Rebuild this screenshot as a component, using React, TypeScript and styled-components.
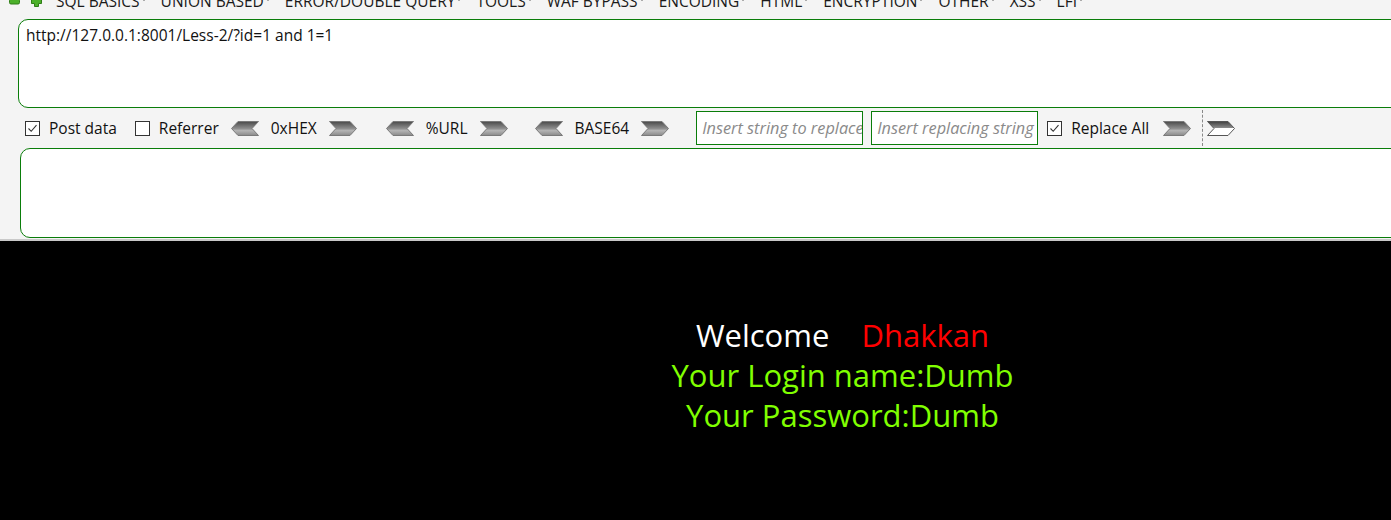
import React from "react";
import styled, { createGlobalStyle } from "styled-components";

const GlobalStyle = createGlobalStyle`
  html, body { margin: 0; padding: 0; background: #000; }
  body { font-family: "Open Sans", "Noto Sans", sans-serif; }
  #root { width: 1391px; height: 520px; overflow: hidden; }
`;

const UI_FONT = `"Open Sans", "Noto Sans", sans-serif`;
const GREEN = "#0a7d0a";

const Page = styled.div`
  display: flex;
  flex-direction: column;
  width: 100%;
  height: 520px;
  overflow: hidden;
  background: #000;
`;

const Panel = styled.div`
  background: #f4f4f4;
  display: flex;
  flex-direction: column;
  padding-bottom: 1px;
  border-bottom: 2px solid #c9c9c9;
`;

const MenuBar = styled.div`
  height: 10px;
  overflow: hidden;
`;

const MenuRow = styled.div`
  display: flex;
  align-items: center;
  height: 20px;
  margin-top: -9px;
  padding-left: 9px;
  font-family: ${UI_FONT};
  font-size: 15.5px;
  line-height: 20px;
  color: #1a1a1a;
  white-space: nowrap;
`;

const RoundIcon = styled.span<{ $gap: number }>`
  display: inline-flex;
  width: 11px;
  height: 11px;
  margin-right: ${(p) => p.$gap}px;
`;

const MenuItem = styled.span`
  display: inline-flex;
  align-items: center;
  margin-right: 15px;
`;

const Caret = styled.span`
  display: inline-block;
  width: 0;
  height: 0;
  margin-left: 2px;
  margin-top: -3px;
  border-left: 2.5px solid transparent;
  border-right: 2.5px solid transparent;
  border-top: 3px solid #222;
`;

const UrlBox = styled.div`
  margin-top: 9px;
  margin-left: 18px;
  width: 1420px;
  height: 77px;
  background: #fff;
  border: 1px solid ${GREEN};
  border-radius: 10px;
  padding: 5px 7px;
  box-sizing: content-box;
  font-family: ${UI_FONT};
  font-size: 15.5px;
  line-height: 20px;
  color: #111;
`;

const Toolbar = styled.div`
  display: flex;
  align-items: center;
  height: 40px;
  padding-left: 25px;
  font-family: ${UI_FONT};
  font-size: 15.5px;
  color: #111;
  white-space: nowrap;
`;

const CheckItem = styled.label<{ $ml: number }>`
  display: inline-flex;
  align-items: center;
  gap: 9px;
  margin-left: ${(p) => p.$ml}px;
`;

const Box = styled.span`
  display: inline-flex;
  align-items: center;
  justify-content: center;
  width: 13px;
  height: 13px;
  border: 1px solid #333;
  background: #fff;
`;

const EncGroup = styled.div<{ $ml: number }>`
  display: inline-flex;
  align-items: center;
  gap: 12px;
  margin-left: ${(p) => p.$ml}px;
`;

const ReplaceInput = styled.div<{ $ml: number; $w: number }>`
  display: flex;
  align-items: center;
  margin-left: ${(p) => p.$ml}px;
  width: ${(p) => p.$w}px;
  min-width: ${(p) => p.$w}px;
  height: 34px;
  border: 1px solid ${GREEN};
  background: #fff;
  box-sizing: border-box;
  padding-left: 5px;
  overflow: hidden;
  font-style: italic;
  color: #8a8a8a;
  font-size: 16.3px;
`;

const Spacer = styled.span<{ $w: number }>`
  display: inline-block;
  width: ${(p) => p.$w}px;
`;

const Dashed = styled.span`
  display: inline-block;
  height: 36px;
  margin: 0 4px 0 11px;
  border-left: 1px dashed #888;
`;

const PostBox = styled.div`
  margin-left: 20px;
  width: 1420px;
  height: 88px;
  background: #fff;
  border: 1px solid ${GREEN};
  border-radius: 10px;
`;

const Stage = styled.div`
  flex: 1;
  display: flex;
  flex-direction: column;
  align-items: center;
  padding-top: 74px;
  padding-left: 294px;
  font-family: ${UI_FONT};
  font-size: 31px;
  line-height: 40px;
`;

const Line = styled.div<{ $c: string }>`
  color: ${(p) => p.$c};
  white-space: pre;
`;

const Red = styled.span`
  color: #ff0000;
`;

let gid = 0;
const Arrow: React.FC<{ dir: "left" | "right"; hollow?: boolean }> = ({ dir, hollow }) => {
  const id = React.useMemo(() => `g${gid++}`, []);
  const pts =
    dir === "left"
      ? "0.5,7.5 7,0.5 27.5,0.5 21,7.5 27.5,14.5 7,14.5"
      : "0.5,0.5 21,0.5 27.5,7.5 21,14.5 0.5,14.5 7,7.5";
  return (
    <svg width="28" height="15" viewBox="0 0 28 15">
      <defs>
        <linearGradient id={id} x1="0" y1="0" x2="0" y2="1">
          {hollow ? (
            <>
              <stop offset="0" stopColor="#3f3f3f" />
              <stop offset="0.45" stopColor="#8a8a8a" />
              <stop offset="0.5" stopColor="#ffffff" />
              <stop offset="1" stopColor="#ffffff" />
            </>
          ) : (
            <>
              <stop offset="0" stopColor="#4a4a4a" />
              <stop offset="0.5" stopColor="#8e8e8e" />
              <stop offset="0.65" stopColor="#b4b4b4" />
              <stop offset="1" stopColor="#8a8a8a" />
            </>
          )}
        </linearGradient>
      </defs>
      <polygon points={pts} fill={`url(#${id})`} stroke={hollow ? "#555" : "#7a7a7a"} strokeWidth="1" />
    </svg>
  );
};

const Check: React.FC<{ on?: boolean }> = ({ on }) => (
  <Box>
    {on && (
      <svg width="11" height="11" viewBox="0 0 11 11">
        <polyline points="1.5,5.5 4.2,8.3 9.5,2.2" fill="none" stroke="#333" strokeWidth="1.1" />
      </svg>
    )}
  </Box>
);

const Minus = () => (
  <svg width="11" height="11" viewBox="0 0 11 11">
    <rect x="0.5" y="3" width="10" height="5" rx="1.5" fill="#4cb02a" stroke="#2f7d17" />
  </svg>
);

const Plus = () => (
  <svg width="11" height="11" viewBox="0 0 11 11">
    <path d="M3.5 0.5h4v3h3v4h-3v3h-4v-3h-3v-4h3z" fill="#4cb02a" stroke="#2f7d17" strokeLinejoin="round" />
  </svg>
);

const menus = [
  "SQL BASICS",
  "UNION BASED",
  "ERROR/DOUBLE QUERY",
  "TOOLS",
  "WAF BYPASS",
  "ENCODING",
  "HTML",
  "ENCRYPTION",
  "OTHER",
  "XSS",
  "LFI",
];

const EncodeGroup: React.FC<{ label: string; ml: number }> = ({ label, ml }) => (
  <EncGroup $ml={ml}>
    <Arrow dir="left" />
    <span>{label}</span>
    <Arrow dir="right" />
  </EncGroup>
);

export default function App() {
  return (
    <>
      <GlobalStyle />
      <Page>
        <Panel>
          <MenuBar>
            <MenuRow>
              <RoundIcon $gap={11}>
                <Minus />
              </RoundIcon>
              <RoundIcon $gap={14}>
                <Plus />
              </RoundIcon>
              {menus.map((m) => (
                <MenuItem key={m}>
                  {m}
                  <Caret />
                </MenuItem>
              ))}
            </MenuRow>
          </MenuBar>
          <UrlBox>http://127.0.0.1:8001/Less-2/?id=1 and 1=1</UrlBox>
          <Toolbar>
            <CheckItem $ml={0}>
              <Check on />
              Post data
            </CheckItem>
            <CheckItem $ml={18}>
              <Check />
              Referrer
            </CheckItem>
            <EncodeGroup label="0xHEX" ml={12} />
            <EncodeGroup label="%URL" ml={29} />
            <EncodeGroup label="BASE64" ml={27} />
            <ReplaceInput $ml={27} $w={167}>Insert string to replace</ReplaceInput>
            <ReplaceInput $ml={8} $w={167}>Insert replacing string</ReplaceInput>
            <CheckItem $ml={9}>
              <Check on />
              Replace All
            </CheckItem>
            <Spacer $w={14} />
            <Arrow dir="right" />
            <Dashed />
            <Arrow dir="right" hollow />
          </Toolbar>
          <PostBox />
        </Panel>
        <Stage>
          <Line $c="#ffffff">
            {"Welcome    "}
            <Red>Dhakkan</Red>
          </Line>
          <Line $c="#80ff00">Your Login name:Dumb</Line>
          <Line $c="#80ff00">Your Password:Dumb</Line>
        </Stage>
      </Page>
    </>
  );
}
